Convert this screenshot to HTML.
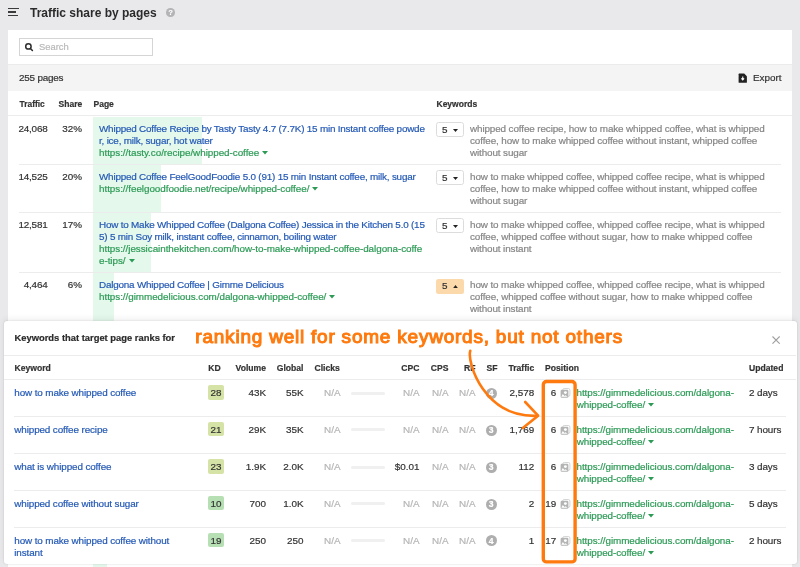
<!DOCTYPE html>
<html><head><meta charset="utf-8"><style>
html,body{margin:0;padding:0;}
body{width:800px;height:567px;overflow:hidden;position:relative;background:#e9e9ec;font-family:"Liberation Sans", sans-serif;}
.t{position:absolute;white-space:nowrap;-webkit-text-stroke:0.2px currentColor;}
#w{position:absolute;left:0;top:0;width:800px;height:567px;will-change:transform;}
.r{position:absolute;box-sizing:content-box;}
</style></head><body><div id="w">
<div class="r" style="left:8px;top:8px;width:11px;height:1.2px;background:#3a3a3a;"></div>
<div class="r" style="left:8px;top:11.4px;width:8px;height:1.2px;background:#3a3a3a;"></div>
<div class="r" style="left:8px;top:15px;width:10px;height:1.2px;background:#3a3a3a;"></div>
<div class="t" style="top:4.54px;font-size:12px;line-height:16px;color:#2b2b2b;font-weight:700;left:30px;-webkit-text-stroke:0;">Traffic share by pages</div>
<div class="r" style="left:166.4px;top:8.4px;width:8.5px;height:8.5px;border-radius:50%;background:#b4b4b6;"></div>
<div class="t" style="top:7.97px;font-size:7px;line-height:10px;color:#fff;font-weight:700;left:-29.349999999999994px;width:400px;text-align:center;">?</div>
<div class="r" style="left:8px;top:30px;width:784px;height:537px;background:#fff;"></div>
<div class="r" style="left:19px;top:38px;width:132px;height:15.7px;border:1px solid #d5d5d5;background:#fff"></div>
<svg class="r" style="left:24px;top:42px" width="11" height="11" viewBox="0 0 11 11"><circle cx="4.4" cy="4.4" r="2.7" fill="none" stroke="#2d2d2d" stroke-width="1.5"/><line x1="6.4" y1="6.5" x2="8.4" y2="8.5" stroke="#2d2d2d" stroke-width="1.6" stroke-linecap="round"/></svg>
<div class="t" style="top:41.34px;font-size:9.4px;line-height:12px;color:#b9b9b9;left:39px;">Search</div>
<div class="r" style="left:8px;top:64px;width:784px;height:26.6px;background:#f4f4f4;"></div>
<div class="r" style="left:8px;top:64px;width:784px;height:1px;background:#ebebeb;"></div>
<div class="t" style="top:71.87px;font-size:9.9px;line-height:12px;color:#333333;letter-spacing:-0.2px;left:19px;">255 pages</div>
<svg class="r" style="left:738px;top:72.5px" width="10" height="11" viewBox="0 0 10 11"><path d="M1.2 0.6 H6.2 L8.9 3.3 V9.2 Q8.9 9.8 8.3 9.8 H1.2 Q0.6 9.8 0.6 9.2 V1.2 Q0.6 0.6 1.2 0.6Z" fill="#222"/><path d="M4.75 3.6 V6.6 M3.4 5.4 L4.75 6.9 L6.1 5.4" stroke="#fff" stroke-width="1.1" fill="none"/></svg>
<div class="t" style="top:71.97px;font-size:9.9px;line-height:12px;color:#333333;left:752.9px;">Export</div>
<div class="t" style="top:97.69px;font-size:8.4px;line-height:12px;color:#333333;font-weight:700;left:19.6px;">Traffic</div>
<div class="t" style="top:97.65px;font-size:8.5px;line-height:12px;color:#333333;font-weight:700;left:58.6px;">Share</div>
<div class="t" style="top:97.65px;font-size:8.5px;line-height:12px;color:#333333;font-weight:700;left:93.5px;">Page</div>
<div class="t" style="top:97.65px;font-size:8.5px;line-height:12px;color:#333333;font-weight:700;left:436.5px;">Keywords</div>
<div class="r" style="left:8px;top:115px;width:784px;height:1px;background:#ececec;"></div>
<div class="r" style="left:93px;top:117px;width:109.4px;height:47px;background:#e5f8ec;"></div>
<div class="t" style="top:122.57px;font-size:9.9px;line-height:12px;color:#333333;letter-spacing:-0.2px;left:-352.5px;width:400px;text-align:right;">24,068</div>
<div class="t" style="top:122.57px;font-size:9.9px;line-height:12px;color:#333333;left:-318px;width:400px;text-align:right;">32%</div>
<div class="t" style="top:122.57px;font-size:9.9px;line-height:12px;color:#2459b5;letter-spacing:-0.2px;left:99px;">Whipped Coffee Recipe by Tasty Tasty 4.7 (7.7K) 15 min Instant coffee powde</div>
<div class="t" style="top:134.57px;font-size:9.9px;line-height:12px;color:#2459b5;letter-spacing:-0.2px;left:99px;">r, ice, milk, sugar, hot water</div>
<div class="t" style="top:146.57px;font-size:9.9px;line-height:12px;color:#2b9a55;letter-spacing:-0.05px;left:99px;">https://tasty.co/recipe/whipped-coffee<svg width="6" height="4" viewBox="0 0 6 4" style="vertical-align:1px;margin-left:3px"><path d="M0 0H6L3 3.6Z" fill="currentColor"/></svg></div>
<div class="t" style="top:122.57px;font-size:9.9px;line-height:12px;color:#858585;letter-spacing:-0.115px;left:470px;">whipped coffee recipe, how to make whipped coffee, what is whipped</div>
<div class="t" style="top:134.57px;font-size:9.9px;line-height:12px;color:#858585;letter-spacing:-0.115px;left:470px;">coffee, how to make whipped coffee without instant, whipped coffee</div>
<div class="t" style="top:146.57px;font-size:9.9px;line-height:12px;color:#858585;letter-spacing:-0.115px;left:470px;">without sugar</div>
<div class="r" style="left:436.3px;top:122.2px;width:25.7px;height:12.6px;border-radius:2.5px;border:1px solid #dcdcdc;background:#fff"></div>
<svg class="r" style="left:453.3px;top:128.8px" width="5" height="3" viewBox="0 0 5 3"><path d="M0 0H5L2.5 3Z" fill="#222"/></svg>
<div class="t" style="top:123.67px;font-size:9.9px;line-height:12px;color:#333333;left:47.5px;width:400px;text-align:right;">5</div>
<div class="r" style="left:93px;top:165px;width:68.4px;height:47px;background:#e5f8ec;"></div>
<div class="r" style="left:19px;top:164px;width:762px;height:1px;background:#ececec;"></div>
<div class="t" style="top:170.57px;font-size:9.9px;line-height:12px;color:#333333;letter-spacing:-0.2px;left:-352.5px;width:400px;text-align:right;">14,525</div>
<div class="t" style="top:170.57px;font-size:9.9px;line-height:12px;color:#333333;left:-318px;width:400px;text-align:right;">20%</div>
<div class="t" style="top:170.57px;font-size:9.9px;line-height:12px;color:#2459b5;letter-spacing:-0.2px;left:99px;">Whipped Coffee FeelGoodFoodie 5.0 (91) 15 min Instant coffee, milk, sugar</div>
<div class="t" style="top:182.57px;font-size:9.9px;line-height:12px;color:#2b9a55;letter-spacing:-0.05px;left:99px;">https://feelgoodfoodie.net/recipe/whipped-coffee/<svg width="6" height="4" viewBox="0 0 6 4" style="vertical-align:1px;margin-left:3px"><path d="M0 0H6L3 3.6Z" fill="currentColor"/></svg></div>
<div class="t" style="top:170.57px;font-size:9.9px;line-height:12px;color:#858585;letter-spacing:-0.115px;left:470px;">how to make whipped coffee, whipped coffee recipe, what is whipped</div>
<div class="t" style="top:182.57px;font-size:9.9px;line-height:12px;color:#858585;letter-spacing:-0.115px;left:470px;">coffee, how to make whipped coffee without instant, whipped coffee</div>
<div class="t" style="top:194.57px;font-size:9.9px;line-height:12px;color:#858585;letter-spacing:-0.115px;left:470px;">without sugar</div>
<div class="r" style="left:436.3px;top:170.2px;width:25.7px;height:12.6px;border-radius:2.5px;border:1px solid #dcdcdc;background:#fff"></div>
<svg class="r" style="left:453.3px;top:176.79999999999998px" width="5" height="3" viewBox="0 0 5 3"><path d="M0 0H5L2.5 3Z" fill="#222"/></svg>
<div class="t" style="top:171.67px;font-size:9.9px;line-height:12px;color:#333333;left:47.5px;width:400px;text-align:right;">5</div>
<div class="r" style="left:93px;top:213px;width:58.1px;height:59px;background:#e5f8ec;"></div>
<div class="r" style="left:19px;top:212px;width:762px;height:1px;background:#ececec;"></div>
<div class="t" style="top:218.57px;font-size:9.9px;line-height:12px;color:#333333;letter-spacing:-0.2px;left:-352.5px;width:400px;text-align:right;">12,581</div>
<div class="t" style="top:218.57px;font-size:9.9px;line-height:12px;color:#333333;left:-318px;width:400px;text-align:right;">17%</div>
<div class="t" style="top:218.57px;font-size:9.9px;line-height:12px;color:#2459b5;letter-spacing:-0.2px;left:99px;">How to Make Whipped Coffee (Dalgona Coffee) Jessica in the Kitchen 5.0 (15</div>
<div class="t" style="top:230.57px;font-size:9.9px;line-height:12px;color:#2459b5;letter-spacing:-0.2px;left:99px;">5) 5 min Soy milk, instant coffee, cinnamon, boiling water</div>
<div class="t" style="top:242.57px;font-size:9.9px;line-height:12px;color:#2b9a55;letter-spacing:-0.05px;left:99px;">https://jessicainthekitchen.com/how-to-make-whipped-coffee-dalgona-coffe</div>
<div class="t" style="top:254.57px;font-size:9.9px;line-height:12px;color:#2b9a55;letter-spacing:-0.05px;left:99px;">e-tips/<svg width="6" height="4" viewBox="0 0 6 4" style="vertical-align:1px;margin-left:3px"><path d="M0 0H6L3 3.6Z" fill="currentColor"/></svg></div>
<div class="t" style="top:218.57px;font-size:9.9px;line-height:12px;color:#858585;letter-spacing:-0.115px;left:470px;">how to make whipped coffee, whipped coffee recipe, what is whipped</div>
<div class="t" style="top:230.57px;font-size:9.9px;line-height:12px;color:#858585;letter-spacing:-0.115px;left:470px;">coffee, whipped coffee without sugar, how to make whipped coffee</div>
<div class="t" style="top:242.57px;font-size:9.9px;line-height:12px;color:#858585;letter-spacing:-0.115px;left:470px;">without instant</div>
<div class="r" style="left:436.3px;top:218.2px;width:25.7px;height:12.6px;border-radius:2.5px;border:1px solid #dcdcdc;background:#fff"></div>
<svg class="r" style="left:453.3px;top:224.79999999999998px" width="5" height="3" viewBox="0 0 5 3"><path d="M0 0H5L2.5 3Z" fill="#222"/></svg>
<div class="t" style="top:219.67px;font-size:9.9px;line-height:12px;color:#333333;left:47.5px;width:400px;text-align:right;">5</div>
<div class="r" style="left:93px;top:273px;width:20.5px;height:57px;background:#e5f8ec;"></div>
<div class="r" style="left:19px;top:272px;width:762px;height:1px;background:#ececec;"></div>
<div class="t" style="top:278.57px;font-size:9.9px;line-height:12px;color:#333333;letter-spacing:-0.2px;left:-352.5px;width:400px;text-align:right;">4,464</div>
<div class="t" style="top:278.57px;font-size:9.9px;line-height:12px;color:#333333;left:-318px;width:400px;text-align:right;">6%</div>
<div class="t" style="top:278.57px;font-size:9.9px;line-height:12px;color:#2459b5;letter-spacing:-0.2px;left:99px;">Dalgona Whipped Coffee | Gimme Delicious</div>
<div class="t" style="top:290.57px;font-size:9.9px;line-height:12px;color:#2b9a55;letter-spacing:-0.05px;left:99px;">https://gimmedelicious.com/dalgona-whipped-coffee/<svg width="6" height="4" viewBox="0 0 6 4" style="vertical-align:1px;margin-left:3px"><path d="M0 0H6L3 3.6Z" fill="currentColor"/></svg></div>
<div class="t" style="top:278.57px;font-size:9.9px;line-height:12px;color:#858585;letter-spacing:-0.115px;left:470px;">how to make whipped coffee, whipped coffee recipe, what is whipped</div>
<div class="t" style="top:290.57px;font-size:9.9px;line-height:12px;color:#858585;letter-spacing:-0.115px;left:470px;">coffee, whipped coffee without sugar, how to make whipped coffee</div>
<div class="t" style="top:302.57px;font-size:9.9px;line-height:12px;color:#858585;letter-spacing:-0.115px;left:470px;">without instant</div>
<div class="r" style="left:436.3px;top:279.2px;width:27.7px;height:14.6px;border-radius:2.5px;background:#fbd9aa"></div>
<svg class="r" style="left:453.3px;top:285.2px" width="5" height="3.2" viewBox="0 0 5 3.2"><path d="M0 3.2H5L2.5 0Z" fill="#222"/></svg>
<div class="t" style="top:279.67px;font-size:9.9px;line-height:12px;color:#333333;left:47.5px;width:400px;text-align:right;">5</div>
<div class="r" style="left:93px;top:564px;width:14px;height:3px;background:#e5f8ec;"></div>
<div class="r" style="left:4px;top:321.3px;width:792.5px;height:242.5px;background:#fff;border-radius:3px;box-shadow:0 0 2px rgba(0,0,0,0.16), 0 -2px 6px rgba(0,0,0,0.07)"></div>
<div class="t" style="top:332.04px;font-size:9.4px;line-height:12px;color:#2b2b2b;font-weight:700;left:14.5px;">Keywords that target page ranks for</div>
<svg class="r" style="left:771.6px;top:335.6px" width="8.2" height="8.2" viewBox="0 0 8.2 8.2"><path d="M0.5 0.5L7.7 7.7M7.7 0.5L0.5 7.7" stroke="#a0a0a0" stroke-width="1.1"/></svg>
<div class="r" style="left:4px;top:355px;width:792px;height:1px;background:#ececec;"></div>
<div class="t" style="top:362.22px;font-size:8.6px;line-height:12px;color:#333333;font-weight:700;left:14.5px;">Keyword</div>
<div class="t" style="top:362.22px;font-size:8.6px;line-height:12px;color:#333333;font-weight:700;left:208.3px;">KD</div>
<div class="t" style="top:362.22px;font-size:8.6px;line-height:12px;color:#333333;font-weight:700;left:-134px;width:400px;text-align:right;">Volume</div>
<div class="t" style="top:362.22px;font-size:8.6px;line-height:12px;color:#333333;font-weight:700;left:-96.5px;width:400px;text-align:right;">Global</div>
<div class="t" style="top:362.22px;font-size:8.6px;line-height:12px;color:#333333;font-weight:700;left:314.5px;">Clicks</div>
<div class="t" style="top:362.22px;font-size:8.6px;line-height:12px;color:#333333;font-weight:700;left:19.5px;width:400px;text-align:right;">CPC</div>
<div class="t" style="top:362.22px;font-size:8.6px;line-height:12px;color:#333333;font-weight:700;left:48.5px;width:400px;text-align:right;">CPS</div>
<div class="t" style="top:362.22px;font-size:8.6px;line-height:12px;color:#333333;font-weight:700;left:75.5px;width:400px;text-align:right;">RF</div>
<div class="t" style="top:362.22px;font-size:8.6px;line-height:12px;color:#333333;font-weight:700;left:97.5px;width:400px;text-align:right;">SF</div>
<div class="t" style="top:362.22px;font-size:8.6px;line-height:12px;color:#333333;font-weight:700;left:134.20000000000005px;width:400px;text-align:right;">Traffic</div>
<div class="t" style="top:362.22px;font-size:8.6px;line-height:12px;color:#333333;font-weight:700;left:545px;">Position</div>
<div class="t" style="top:362.22px;font-size:8.6px;line-height:12px;color:#333333;font-weight:700;left:749px;">Updated</div>
<div class="r" style="left:4px;top:379px;width:792px;height:1px;background:#ececec;"></div>
<div class="t" style="top:386.97px;font-size:9.9px;line-height:12px;color:#2459b5;letter-spacing:-0.12px;left:14.3px;">how to make whipped coffee</div>
<div class="r" style="left:208px;top:385.0px;width:16px;height:14.5px;border-radius:2px;background:#d5e3a6"></div>
<div class="t" style="top:386.97px;font-size:9.9px;line-height:12px;color:#333;left:16px;width:400px;text-align:center;">28</div>
<div class="t" style="top:386.97px;font-size:9.9px;line-height:12px;color:#333333;left:-134px;width:400px;text-align:right;">43K</div>
<div class="t" style="top:386.97px;font-size:9.9px;line-height:12px;color:#333333;left:-96.5px;width:400px;text-align:right;">55K</div>
<div class="t" style="top:386.97px;font-size:9.9px;line-height:12px;color:#b5b5b5;left:-59.5px;width:400px;text-align:right;">N/A</div>
<div class="r" style="left:351px;top:391.5px;width:33.5px;height:3px;background:#f0f0f0;border-radius:2px;"></div>
<div class="t" style="top:386.97px;font-size:9.9px;line-height:12px;color:#b5b5b5;left:19.5px;width:400px;text-align:right;">N/A</div>
<div class="t" style="top:386.97px;font-size:9.9px;line-height:12px;color:#b5b5b5;left:48.5px;width:400px;text-align:right;">N/A</div>
<div class="t" style="top:386.97px;font-size:9.9px;line-height:12px;color:#b5b5b5;left:75.5px;width:400px;text-align:right;">N/A</div>
<div class="r" style="left:485.75px;top:387.7px;width:11px;height:11px;border-radius:50%;background:#aeaeae"></div>
<div class="t" style="top:387.22px;font-size:8.6px;line-height:12px;color:#fff;font-weight:700;left:291.25px;width:400px;text-align:center;">4</div>
<div class="t" style="top:386.97px;font-size:9.9px;line-height:12px;color:#333333;left:134.20000000000005px;width:400px;text-align:right;">2,578</div>
<div class="t" style="top:386.97px;font-size:9.9px;line-height:12px;color:#333333;left:156.20000000000005px;width:400px;text-align:right;">6</div>
<svg class="r" style="left:560px;top:388.0px" width="10.5" height="10" viewBox="0 0 10.5 10"><rect x="2.7" y="0.5" width="7.2" height="7.9" rx="1.5" fill="none" stroke="#cacaca" stroke-width="0.8"/><rect x="0.6" y="1.8" width="7.8" height="7.9" rx="1.3" fill="#b4b4b4"/><circle cx="5.4" cy="4.6" r="1.45" fill="#fff"/><path d="M1.3 8.8 L2.8 6.1 L4.5 8.0 L5.6 7.3 L7.6 8.8Z" fill="#fff"/></svg>
<div class="t" style="top:386.97px;font-size:9.9px;line-height:12px;color:#2b9a55;letter-spacing:-0.083px;left:576.5px;">https://gimmedelicious.com/dalgona-</div>
<div class="t" style="top:398.97px;font-size:9.9px;line-height:12px;color:#2b9a55;letter-spacing:-0.083px;left:576.8px;">whipped-coffee/<svg width="6" height="4" viewBox="0 0 6 4" style="vertical-align:1px;margin-left:3px"><path d="M0 0H6L3 3.6Z" fill="currentColor"/></svg></div>
<div class="t" style="top:386.97px;font-size:9.9px;line-height:12px;color:#333333;letter-spacing:-0.1px;left:749px;">2 days</div>
<div class="r" style="left:14px;top:416px;width:772px;height:1px;background:#ececec;"></div>
<div class="t" style="top:423.77px;font-size:9.9px;line-height:12px;color:#2459b5;letter-spacing:-0.12px;left:14.3px;">whipped coffee recipe</div>
<div class="r" style="left:208px;top:421.8px;width:16px;height:14.5px;border-radius:2px;background:#d5e3a6"></div>
<div class="t" style="top:423.77px;font-size:9.9px;line-height:12px;color:#333;left:16px;width:400px;text-align:center;">21</div>
<div class="t" style="top:423.77px;font-size:9.9px;line-height:12px;color:#333333;left:-134px;width:400px;text-align:right;">29K</div>
<div class="t" style="top:423.77px;font-size:9.9px;line-height:12px;color:#333333;left:-96.5px;width:400px;text-align:right;">35K</div>
<div class="t" style="top:423.77px;font-size:9.9px;line-height:12px;color:#b5b5b5;left:-59.5px;width:400px;text-align:right;">N/A</div>
<div class="r" style="left:351px;top:428.3px;width:33.5px;height:3px;background:#f0f0f0;border-radius:2px;"></div>
<div class="t" style="top:423.77px;font-size:9.9px;line-height:12px;color:#b5b5b5;left:19.5px;width:400px;text-align:right;">N/A</div>
<div class="t" style="top:423.77px;font-size:9.9px;line-height:12px;color:#b5b5b5;left:48.5px;width:400px;text-align:right;">N/A</div>
<div class="t" style="top:423.77px;font-size:9.9px;line-height:12px;color:#b5b5b5;left:75.5px;width:400px;text-align:right;">N/A</div>
<div class="r" style="left:485.75px;top:424.5px;width:11px;height:11px;border-radius:50%;background:#aeaeae"></div>
<div class="t" style="top:424.02px;font-size:8.6px;line-height:12px;color:#fff;font-weight:700;left:291.25px;width:400px;text-align:center;">3</div>
<div class="t" style="top:423.77px;font-size:9.9px;line-height:12px;color:#333333;left:134.20000000000005px;width:400px;text-align:right;">1,769</div>
<div class="t" style="top:423.77px;font-size:9.9px;line-height:12px;color:#333333;left:156.20000000000005px;width:400px;text-align:right;">6</div>
<svg class="r" style="left:560px;top:424.8px" width="10.5" height="10" viewBox="0 0 10.5 10"><rect x="2.7" y="0.5" width="7.2" height="7.9" rx="1.5" fill="none" stroke="#cacaca" stroke-width="0.8"/><rect x="0.6" y="1.8" width="7.8" height="7.9" rx="1.3" fill="#b4b4b4"/><circle cx="5.4" cy="4.6" r="1.45" fill="#fff"/><path d="M1.3 8.8 L2.8 6.1 L4.5 8.0 L5.6 7.3 L7.6 8.8Z" fill="#fff"/></svg>
<div class="t" style="top:423.77px;font-size:9.9px;line-height:12px;color:#2b9a55;letter-spacing:-0.083px;left:576.5px;">https://gimmedelicious.com/dalgona-</div>
<div class="t" style="top:435.77px;font-size:9.9px;line-height:12px;color:#2b9a55;letter-spacing:-0.083px;left:576.8px;">whipped-coffee/<svg width="6" height="4" viewBox="0 0 6 4" style="vertical-align:1px;margin-left:3px"><path d="M0 0H6L3 3.6Z" fill="currentColor"/></svg></div>
<div class="t" style="top:423.77px;font-size:9.9px;line-height:12px;color:#333333;letter-spacing:-0.1px;left:749px;">7 hours</div>
<div class="r" style="left:14px;top:453px;width:772px;height:1px;background:#ececec;"></div>
<div class="t" style="top:460.97px;font-size:9.9px;line-height:12px;color:#2459b5;letter-spacing:-0.12px;left:14.3px;">what is whipped coffee</div>
<div class="r" style="left:208px;top:459.0px;width:16px;height:14.5px;border-radius:2px;background:#d5e3a6"></div>
<div class="t" style="top:460.97px;font-size:9.9px;line-height:12px;color:#333;left:16px;width:400px;text-align:center;">23</div>
<div class="t" style="top:460.97px;font-size:9.9px;line-height:12px;color:#333333;left:-134px;width:400px;text-align:right;">1.9K</div>
<div class="t" style="top:460.97px;font-size:9.9px;line-height:12px;color:#333333;left:-96.5px;width:400px;text-align:right;">2.0K</div>
<div class="t" style="top:460.97px;font-size:9.9px;line-height:12px;color:#b5b5b5;left:-59.5px;width:400px;text-align:right;">N/A</div>
<div class="r" style="left:351px;top:465.5px;width:33.5px;height:3px;background:#f0f0f0;border-radius:2px;"></div>
<div class="t" style="top:460.97px;font-size:9.9px;line-height:12px;color:#333333;left:19.5px;width:400px;text-align:right;">$0.01</div>
<div class="t" style="top:460.97px;font-size:9.9px;line-height:12px;color:#b5b5b5;left:48.5px;width:400px;text-align:right;">N/A</div>
<div class="t" style="top:460.97px;font-size:9.9px;line-height:12px;color:#b5b5b5;left:75.5px;width:400px;text-align:right;">N/A</div>
<div class="r" style="left:485.75px;top:461.7px;width:11px;height:11px;border-radius:50%;background:#aeaeae"></div>
<div class="t" style="top:461.22px;font-size:8.6px;line-height:12px;color:#fff;font-weight:700;left:291.25px;width:400px;text-align:center;">3</div>
<div class="t" style="top:460.97px;font-size:9.9px;line-height:12px;color:#333333;left:134.20000000000005px;width:400px;text-align:right;">112</div>
<div class="t" style="top:460.97px;font-size:9.9px;line-height:12px;color:#333333;left:156.20000000000005px;width:400px;text-align:right;">6</div>
<svg class="r" style="left:560px;top:462.0px" width="10.5" height="10" viewBox="0 0 10.5 10"><rect x="2.7" y="0.5" width="7.2" height="7.9" rx="1.5" fill="none" stroke="#cacaca" stroke-width="0.8"/><rect x="0.6" y="1.8" width="7.8" height="7.9" rx="1.3" fill="#b4b4b4"/><circle cx="5.4" cy="4.6" r="1.45" fill="#fff"/><path d="M1.3 8.8 L2.8 6.1 L4.5 8.0 L5.6 7.3 L7.6 8.8Z" fill="#fff"/></svg>
<div class="t" style="top:460.97px;font-size:9.9px;line-height:12px;color:#2b9a55;letter-spacing:-0.083px;left:576.5px;">https://gimmedelicious.com/dalgona-</div>
<div class="t" style="top:472.97px;font-size:9.9px;line-height:12px;color:#2b9a55;letter-spacing:-0.083px;left:576.8px;">whipped-coffee/<svg width="6" height="4" viewBox="0 0 6 4" style="vertical-align:1px;margin-left:3px"><path d="M0 0H6L3 3.6Z" fill="currentColor"/></svg></div>
<div class="t" style="top:460.97px;font-size:9.9px;line-height:12px;color:#333333;letter-spacing:-0.1px;left:749px;">3 days</div>
<div class="r" style="left:14px;top:490px;width:772px;height:1px;background:#ececec;"></div>
<div class="t" style="top:497.87px;font-size:9.9px;line-height:12px;color:#2459b5;letter-spacing:-0.12px;left:14.3px;">whipped coffee without sugar</div>
<div class="r" style="left:208px;top:495.9px;width:16px;height:14.5px;border-radius:2px;background:#b7dfb4"></div>
<div class="t" style="top:497.87px;font-size:9.9px;line-height:12px;color:#333;left:16px;width:400px;text-align:center;">10</div>
<div class="t" style="top:497.87px;font-size:9.9px;line-height:12px;color:#333333;left:-134px;width:400px;text-align:right;">700</div>
<div class="t" style="top:497.87px;font-size:9.9px;line-height:12px;color:#333333;left:-96.5px;width:400px;text-align:right;">1.0K</div>
<div class="t" style="top:497.87px;font-size:9.9px;line-height:12px;color:#b5b5b5;left:-59.5px;width:400px;text-align:right;">N/A</div>
<div class="r" style="left:351px;top:502.4px;width:33.5px;height:3px;background:#f0f0f0;border-radius:2px;"></div>
<div class="t" style="top:497.87px;font-size:9.9px;line-height:12px;color:#b5b5b5;left:19.5px;width:400px;text-align:right;">N/A</div>
<div class="t" style="top:497.87px;font-size:9.9px;line-height:12px;color:#b5b5b5;left:48.5px;width:400px;text-align:right;">N/A</div>
<div class="t" style="top:497.87px;font-size:9.9px;line-height:12px;color:#b5b5b5;left:75.5px;width:400px;text-align:right;">N/A</div>
<div class="r" style="left:485.75px;top:498.59999999999997px;width:11px;height:11px;border-radius:50%;background:#aeaeae"></div>
<div class="t" style="top:498.12px;font-size:8.6px;line-height:12px;color:#fff;font-weight:700;left:291.25px;width:400px;text-align:center;">3</div>
<div class="t" style="top:497.87px;font-size:9.9px;line-height:12px;color:#333333;left:134.20000000000005px;width:400px;text-align:right;">2</div>
<div class="t" style="top:497.87px;font-size:9.9px;line-height:12px;color:#333333;left:156.20000000000005px;width:400px;text-align:right;">19</div>
<svg class="r" style="left:560px;top:498.9px" width="10.5" height="10" viewBox="0 0 10.5 10"><rect x="2.7" y="0.5" width="7.2" height="7.9" rx="1.5" fill="none" stroke="#cacaca" stroke-width="0.8"/><rect x="0.6" y="1.8" width="7.8" height="7.9" rx="1.3" fill="#b4b4b4"/><circle cx="5.4" cy="4.6" r="1.45" fill="#fff"/><path d="M1.3 8.8 L2.8 6.1 L4.5 8.0 L5.6 7.3 L7.6 8.8Z" fill="#fff"/></svg>
<div class="t" style="top:497.87px;font-size:9.9px;line-height:12px;color:#2b9a55;letter-spacing:-0.083px;left:576.5px;">https://gimmedelicious.com/dalgona-</div>
<div class="t" style="top:509.87px;font-size:9.9px;line-height:12px;color:#2b9a55;letter-spacing:-0.083px;left:576.8px;">whipped-coffee/<svg width="6" height="4" viewBox="0 0 6 4" style="vertical-align:1px;margin-left:3px"><path d="M0 0H6L3 3.6Z" fill="currentColor"/></svg></div>
<div class="t" style="top:497.87px;font-size:9.9px;line-height:12px;color:#333333;letter-spacing:-0.1px;left:749px;">5 days</div>
<div class="r" style="left:14px;top:527px;width:772px;height:1px;background:#ececec;"></div>
<div class="t" style="top:534.67px;font-size:9.9px;line-height:12px;color:#2459b5;letter-spacing:-0.12px;left:14.3px;">how to make whipped coffee without</div>
<div class="t" style="top:546.67px;font-size:9.9px;line-height:12px;color:#2459b5;letter-spacing:-0.12px;left:14.3px;">instant</div>
<div class="r" style="left:208px;top:532.7px;width:16px;height:14.5px;border-radius:2px;background:#b7dfb4"></div>
<div class="t" style="top:534.67px;font-size:9.9px;line-height:12px;color:#333;left:16px;width:400px;text-align:center;">19</div>
<div class="t" style="top:534.67px;font-size:9.9px;line-height:12px;color:#333333;left:-134px;width:400px;text-align:right;">250</div>
<div class="t" style="top:534.67px;font-size:9.9px;line-height:12px;color:#333333;left:-96.5px;width:400px;text-align:right;">250</div>
<div class="t" style="top:534.67px;font-size:9.9px;line-height:12px;color:#b5b5b5;left:-59.5px;width:400px;text-align:right;">N/A</div>
<div class="r" style="left:351px;top:539.2px;width:33.5px;height:3px;background:#f0f0f0;border-radius:2px;"></div>
<div class="t" style="top:534.67px;font-size:9.9px;line-height:12px;color:#b5b5b5;left:19.5px;width:400px;text-align:right;">N/A</div>
<div class="t" style="top:534.67px;font-size:9.9px;line-height:12px;color:#b5b5b5;left:48.5px;width:400px;text-align:right;">N/A</div>
<div class="t" style="top:534.67px;font-size:9.9px;line-height:12px;color:#b5b5b5;left:75.5px;width:400px;text-align:right;">N/A</div>
<div class="r" style="left:485.75px;top:535.4000000000001px;width:11px;height:11px;border-radius:50%;background:#aeaeae"></div>
<div class="t" style="top:534.92px;font-size:8.6px;line-height:12px;color:#fff;font-weight:700;left:291.25px;width:400px;text-align:center;">4</div>
<div class="t" style="top:534.67px;font-size:9.9px;line-height:12px;color:#333333;left:134.20000000000005px;width:400px;text-align:right;">1</div>
<div class="t" style="top:534.67px;font-size:9.9px;line-height:12px;color:#333333;left:156.20000000000005px;width:400px;text-align:right;">17</div>
<svg class="r" style="left:560px;top:535.7px" width="10.5" height="10" viewBox="0 0 10.5 10"><rect x="2.7" y="0.5" width="7.2" height="7.9" rx="1.5" fill="none" stroke="#cacaca" stroke-width="0.8"/><rect x="0.6" y="1.8" width="7.8" height="7.9" rx="1.3" fill="#b4b4b4"/><circle cx="5.4" cy="4.6" r="1.45" fill="#fff"/><path d="M1.3 8.8 L2.8 6.1 L4.5 8.0 L5.6 7.3 L7.6 8.8Z" fill="#fff"/></svg>
<div class="t" style="top:534.67px;font-size:9.9px;line-height:12px;color:#2b9a55;letter-spacing:-0.083px;left:576.5px;">https://gimmedelicious.com/dalgona-</div>
<div class="t" style="top:546.67px;font-size:9.9px;line-height:12px;color:#2b9a55;letter-spacing:-0.083px;left:576.8px;">whipped-coffee/<svg width="6" height="4" viewBox="0 0 6 4" style="vertical-align:1px;margin-left:3px"><path d="M0 0H6L3 3.6Z" fill="currentColor"/></svg></div>
<div class="t" style="top:534.67px;font-size:9.9px;line-height:12px;color:#333333;letter-spacing:-0.1px;left:749px;">2 hours</div>
<div class="t" style="top:325.92px;font-size:19px;line-height:22px;color:#fe7a0e;letter-spacing:0.78px;left:195.3px;-webkit-text-stroke:1.05px #fe7a0e;">ranking well for some keywords, but not others</div>
<svg class="r" style="left:0;top:0" width="800" height="567" viewBox="0 0 800 567">
<path d="M470.25 350.8 C466.83 362.18 484.08 418.26 537.8 415.8" fill="none" stroke="#fe7a0e" stroke-width="2.6" stroke-linecap="round"/>
<path d="M525.2 402 L538.1 415.7 L522.8 428" fill="none" stroke="#fe7a0e" stroke-width="2.6" stroke-linecap="round" stroke-linejoin="round"/>
<rect x="543.3" y="381.5" width="31.8" height="180.4" rx="3.2" fill="none" stroke="#fe7a0e" stroke-width="3.4"/>
</svg>
</div></body></html>
